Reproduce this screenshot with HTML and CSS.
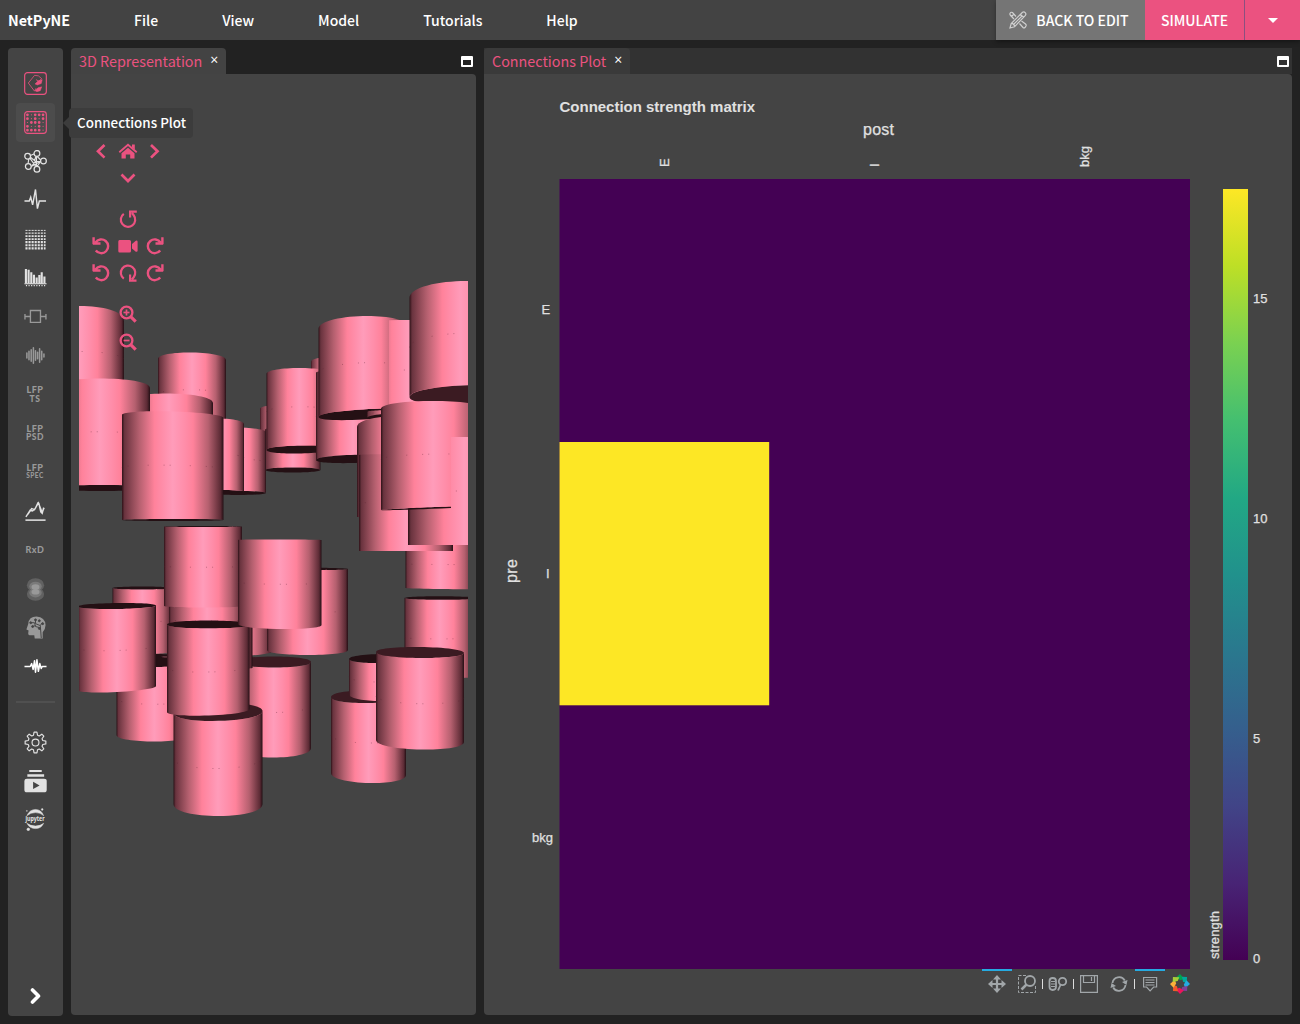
FILE: index.html
```html
<!DOCTYPE html>
<html lang="en">
<head>
<meta charset="utf-8">
<title>NetPyNE</title>
<link rel="stylesheet" href="styles.css">
</head>
<body>
<header class="topbar">
  <nav class="menu">
    <span class="brand">NetPyNE</span><span>File</span><span>View</span><span>Model</span><span>Tutorials</span><span>Help</span>
  </nav>
  <div class="actions">
    <button class="btn back">
      <svg width="20" height="20" viewBox="0 0 20 20" fill="none" stroke="#d0d0d0" stroke-width="1.2"><path d="M2 18l1.200-4.500L14.500 2.300q1.500-1 2.700.3 1.300 1.400.2 2.700L6.500 16.800zM12.500 4.500l3 3M4 13l3 3M5.500 14.500l9-9"/><path d="M8 6.500L4.500 2.500Q3 1.800 2.200 3 1.400 4.300 2.600 5.500L6 9M11.500 13.500l3.500 4q1 .8 2 0l1-1.500q.5-1-.5-2l-4-3M3.500 6.500L6 4"/></svg>
      <span>BACK TO EDIT</span>
    </button>
    <button class="btn simulate">SIMULATE</button>
    <button class="btn more"><i class="caret"></i></button>
  </div>
</header>
<main class="workspace">
  <aside class="sidebar">
    <div class="tool pink"><svg viewBox="0 0 24 24"><rect x=".7" y=".7" width="22.600" height="22.600" rx="3"/><path d="M11 3.500L4.500 11.500 11 20M11 3.500l4 .5 3.500 3-3 2.500-3-1.500M11 20l1.500-3" stroke-width=".8"/><path class="f" d="M11.500 12.500l3-3 4.500-1.500-1 4-4 1.500zM11.500 19.500l3-3 4-1-1.500 4-3.500 1z"/></svg></div>
    <div class="tool pink active"><svg viewBox="0 0 24 24"><rect x=".7" y=".7" width="22.600" height="22.600" rx="3"/><g stroke-width="2.900" stroke-linecap="round"><path d="M3.600 4h0M11.700 4h0M15.800 4h0M19.900 4h0M3.600 8h0M11.700 8h0M19.900 8h0M7.700 12h0M11.700 12h0M15.800 12h0M3.600 16h0M15.800 16h0M3.600 20h0M7.700 20h0M11.700 20h0M15.800 20h0"/><path stroke-width="1.200" d="M7.700 4h0M7.700 8h0M15.800 8h0M3.600 12h0M19.900 12h0M7.700 16h0M11.700 16h0M19.900 16h0M19.900 20h0"/></g></svg>
      <div class="tooltip">Connections Plot</div>
    </div>
    <div class="tool"><svg viewBox="0 0 24 24"><path d="M6 7l5 4 2-6M4 16l1-7M7 18l5-6 2 6M13 6l5 5-5 7M5 7l8 11M12 12h6M8 17l9-5M6 6l5-2M13 5v14"/><g fill="#444" stroke-width="1.300"><circle cx="3.800" cy="6.500" r="3"/><circle cx="13.500" cy="3.600" r="3"/><circle cx="20.300" cy="11.500" r="3"/><circle cx="13.500" cy="20" r="3"/><circle cx="4.500" cy="17.200" r="3"/></g></svg></div>
    <div class="tool"><svg viewBox="0 0 24 24"><path stroke-width="1.500" d="M.5 12.500h5l1.500-4 2 8 3-16 2 20 2-8h7"/></svg></div>
    <div class="tool"><svg viewBox="0 0 24 24"><g stroke-dasharray="2.200 1" stroke-width="2.300"><path stroke-width="1" d="M1.500 2.500h21"/><path stroke-width="1.400" d="M1.500 5.400h21"/><path stroke-width="1.800" d="M1.500 8.500h21M1.500 11.600h21"/><path d="M1.500 14.700h21M1.500 18h21M1.500 21.300h21"/></g></svg></div>
    <div class="tool"><svg viewBox="0 0 24 24"><g stroke-width="2.200"><path d="M2 3v15M4.800 4v14M7.600 6.500v12M10.400 9v9M13.200 12v6M16 9.500v9M18.500 6.500v12M21.300 11v7"/><path stroke-width="1.200" d="M.5 18.500h23"/><path stroke-width="1.400" stroke-dasharray="1.200 1.500" d="M2 20.500h21"/></g></svg></div>
    <div class="tool dim"><svg viewBox="0 0 24 24"><path stroke-width="1.400" d="M6.700 5.700h10.500v12.500H6.700zM1 12h5.700M17.200 12h5.500M1 9.500v5.500M22.900 9.500v5.500"/></svg></div>
    <div class="tool dim"><svg viewBox="0 0 24 24"><path stroke-width="1.600" stroke-linecap="round" d="M3 9.500v5M5.200 7.500v9M7.500 6v12M9.800 4v16M12 7v10M14.200 8.500v7M16.300 5v14M18.500 7.500v9M20.800 10.500v3"/></svg></div>
    <div class="tool dim label"><b>LFP</b><b class="sm">TS</b></div>
    <div class="tool dim label"><b>LFP</b><b class="sm">PSD</b></div>
    <div class="tool dim label"><b>LFP</b><b class="xs">SPEC</b></div>
    <div class="tool"><svg viewBox="0 0 24 24"><path stroke-width="1.500" d="M2 17.500l4.500-7 2.500 1 3-3 2.500-5.500 1 .5 2 9 1.500 1.500 1.500-6M4 15l4-6 3 1 4-7 4 10 2-5"/><path stroke-width="1.600" d="M1.500 21H22.500"/></svg></div>
    <div class="tool dim label"><b>RxD</b></div>
    <div class="tool dim"><svg viewBox="0 0 24 24" class="fl"><g opacity=".35"><ellipse cx="12" cy="7.500" rx="9" ry="7.200"/><ellipse cx="12" cy="16.800" rx="9" ry="7"/></g><g opacity=".45"><ellipse cx="12" cy="8.800" rx="6.500" ry="5"/><ellipse cx="12" cy="15.500" rx="6.500" ry="4.800"/></g><ellipse cx="12" cy="9.500" rx="4.200" ry="3"/><ellipse cx="12" cy="14.500" rx="4.200" ry="2.800"/></svg></div>
    <div class="tool dim"><svg viewBox="0 0 24 24" class="fl"><path d="M4.500 8Q5 .5 13 .5q9 .5 9.500 9 0 4-3 7.500v6.500h-8.300l-.5-3.500H6q-2 0-1.500-3l.3-2-2.300-1z"/><g stroke="#444" stroke-width="1" fill="#444"><path fill="none" d="M7 7h4l1 4 4 1M12 4v4l5 2 2-3M9 11l3-1M17 10l1 13"/><circle cx="7" cy="7" r="1"/><circle cx="12" cy="4" r="1"/><circle cx="16" cy="5" r="1"/><circle cx="9" cy="11" r="1"/><circle cx="19.500" cy="8" r="1"/><circle cx="16" cy="13" r="1"/></g></svg></div>
    <div class="tool"><svg viewBox="0 0 24 24"><path stroke="#fff" stroke-width="1.600" stroke-linejoin="round" d="M.5 12h6l1.500-3 1.500 6L11 6l1 12 1.500-13 1.500 12 1.500-8 1.500 5 1-2h4.500"/></svg></div>
    <hr>
    <div class="tool"><svg viewBox="0 0 24 24"><circle cx="12" cy="12" r="3.600"/><path stroke-linejoin="round" d="M10.500 1.200h3l.6 3.200 1.800.8 2.700-1.900 2.100 2.100-1.900 2.700.8 1.800 3.200.6v3l-3.200.6-.8 1.800 1.900 2.700-2.100 2.100-2.700-1.900-1.800.8-.6 3.200h-3l-.6-3.200-1.800-.8-2.700 1.900-2.100-2.100 1.900-2.700-.8-1.800-3.200-.6v-3l3.200-.6.8-1.800-1.900-2.700 2.100-2.100 2.700 1.900 1.800-.8z"/></svg></div>
    <div class="tool"><svg viewBox="0 0 24 24" class="fl"><path d="M5.500 0h13v2h-13zM3.500 4.500h17.500V7H3.500z"/><path fill-rule="evenodd" d="M3 9h18q2.700 0 2.700 2.500v9q0 2.700-2.700 2.700H3Q.4 23.200.4 20.500v-9Q.4 9 3 9zm6.500 3.300v7.500l6.800-3.700z"/></svg></div>
    <div class="tool"><svg viewBox="0 0 24 24"><path class="f" d="M3 8Q6 1.500 12 1.500T20.500 8Q17 4.800 12 4.800T3 8zM3 16q3 5.500 9 5.500t8.500-5.500q-3.500 2.800-8.500 2.800t-9-2.800z"/><circle class="f" cx="4.500" cy="22.300" r="1.400"/><circle class="f" cx="19" cy="1.500" r=".9"/><circle class="f" cx="3" cy="3" r=".5"/><text x="1.500" y="13.800" textLength="20" lengthAdjust="spacingAndGlyphs">jupyter</text></svg></div>
    <div class="expand"><svg width="14" height="18" viewBox="0 0 14 18" fill="none" stroke="#fff" stroke-width="3.600" stroke-linecap="round" stroke-linejoin="round"><path d="M3.500 4l6 6-6 6"/></svg></div>
  </aside>
  <section class="pane view3d">
    <div class="tabs"><div class="tab"><span>3D Representation</span><b>×</b></div><i class="maximize"></i></div>
    <div class="content">
      <svg class="scene" viewBox="79 74 389 941" width="389" height="941">
        <defs><linearGradient id="shade"><stop offset="0" stop-color="#2e1218"/><stop offset=".025" stop-color="#69333e"/><stop offset=".17" stop-color="#b5606f"/><stop offset=".32" stop-color="#ff829b"/><stop offset=".4" stop-color="#ff8da9"/><stop offset=".5" stop-color="#ff9cba"/><stop offset=".62" stop-color="#ff8da9"/><stop offset=".7" stop-color="#ff829b"/><stop offset=".85" stop-color="#b5606f"/><stop offset=".97" stop-color="#5c2b35"/><stop offset="1" stop-color="#241015"/></linearGradient></defs>
        <g id="cells"></g>
        <g fill="none" stroke="#eb5280" stroke-width="2.700">
          <path d="M104.500 145l-6.500 6.300 6.500 6.300M151 145l6.500 6.300-6.500 6.300M121.500 174.500l6.500 6.500 6.500-6.500"/>
          <path stroke-width="1.800" d="M119.300 152.300l8.700-7.500 8.700 7.500"/>
          <path fill="#eb5280" stroke="none" d="M128 147.800l6.500 5.500v5.300h-4.300v-4h-4.400v4h-4.300v-5.300zM132 144.500h2.800v5l-2.800-2z"/>
          <path stroke-width="2.200" d="M123.800 213.800a7.200 7.200 0 1 0 9.900 1.400l-1.700-2.200M136.800 211.600h-6.700v6"/>
          <path id="ccw" stroke-width="2.400" d="M95.500 242.500a6.900 6.900 0 1 1 .3 8M93.600 237.300v7M93 243.500h7.500"/>
          <use href="#ccw" y="27"/>
          <path id="cw" stroke-width="2.400" d="M160.500 242.500a6.900 6.900 0 1 0-.3 8M162.400 237.300v7M163 243.500h-7.500"/>
          <use href="#cw" y="27"/>
          <path stroke-width="2.200" d="M123.800 278.600a7.200 7.200 0 1 1 9.900-1.400l-1.700 2.200M136.500 280.600h-6.400v-6"/>
          <path fill="#eb5280" stroke="none" d="M119.500 240h10q1.500 0 1.500 1.500v9.500q0 1.500-1.500 1.500h-10q-1.200 0-1.200-1.500v-9.500q0-1.500 1.200-1.500zM132 244l3.800-3.300q1.800-.5 1.800 1v9q0 1.500-1.800 1L132 248.500z"/>
          <g id="lens" stroke-width="2.300"><circle cx="126.500" cy="312.500" r="5.900"/><path stroke-width="3.200" d="M130.700 316.700l5 5"/><path stroke-width="1.700" d="M123.500 312.500h6"/></g>
          <path stroke-width="1.700" d="M126.500 309.500v6"/>
          <use href="#lens" y="28"/>
        </g>
      </svg>
    </div>
  </section>
  <section class="pane plot">
    <div class="tabs"><div class="tab"><span>Connections Plot</span><b>×</b></div><i class="maximize"></i></div>
    <div class="content">
      <svg class="chart" viewBox="484 74 808 941" width="808" height="941">
        <defs><linearGradient id="viridis" x1="0" y1="0" x2="0" y2="1"><stop offset="0" stop-color="#fde725"/><stop offset=".1" stop-color="#bddf26"/><stop offset=".2" stop-color="#7ad151"/><stop offset=".3" stop-color="#44bf70"/><stop offset=".4" stop-color="#22a884"/><stop offset=".5" stop-color="#21918c"/><stop offset=".6" stop-color="#2a788e"/><stop offset=".7" stop-color="#355f8d"/><stop offset=".8" stop-color="#414487"/><stop offset=".9" stop-color="#482475"/><stop offset="1" stop-color="#440154"/></linearGradient></defs>
        <rect x="559.500" y="179" width="630.500" height="790" fill="#440154"/>
        <rect x="559.500" y="442" width="209.700" height="263.300" fill="#fde725"/>
        <rect x="1223" y="189" width="25" height="771" fill="url(#viridis)"/>
        <text class="title" x="559.500" y="112" textLength="195.500">Connection strength matrix</text>
        <text class="axis" x="863" y="135" textLength="31">post</text>
        <text class="axis" transform="translate(516.500 583) rotate(-90)" textLength="24">pre</text>
        <text transform="translate(668.500 167) rotate(-90)">E</text>
        <text transform="translate(878.500 167) rotate(-90)">I</text>
        <text transform="translate(1089 167) rotate(-90)" textLength="21">bkg</text>
        <text x="541.500" y="314">E</text><text x="546" y="578">I</text><text x="532" y="842" textLength="21">bkg</text>
        <text x="1253" y="303">15</text><text x="1253" y="523">10</text><text x="1253" y="743">5</text><text x="1253" y="963">0</text>
        <text transform="translate(1219 959) rotate(-90)" textLength="48">strength</text>
        <path stroke="#26aae1" stroke-width="2" d="M982 970h30M1135 970h30"/>
        <path stroke="#ddd" d="M1042.500 979v10M1073.500 979v10M1134.500 979v10"/>
        <g fill="none" stroke="#a1a6a9" stroke-width="1.800">
          <path stroke-width="2.200" d="M990 984h14M997 977v14"/><path fill="#a1a6a9" stroke="none" d="M997 975l4 4.500h-8zM997 993l4-4.500h-8zM988 984l4.500-4v8zM1006 984l-4.500-4v8z"/>
          <path stroke-width="1" stroke-dasharray="3 1.500" d="M1026 975.500h-7.500v17h17V986"/><circle cx="1030" cy="981" r="5"/><path stroke-width="2.500" d="M1026.500 984.500l-5 5"/>
          <rect x="1049.500" y="978" width="6.500" height="12" rx="3.200"/><path stroke-width="1" d="M1051 981.500h4M1051 984h4M1051 986.500h4"/><circle cx="1062.500" cy="981.500" r="3.700"/><path d="M1060.500 985l-2.500 5.500"/>
          <path stroke-width="1.200" d="M1080.600 975.600h16.800v16.800h-16.800zM1083.500 976v6.500h11V976M1091.500 977v4"/>
          <path d="M1112.500 983a6.600 6.600 0 0 1 12.300-2.500M1125.500 985a6.600 6.600 0 0 1-12.300 2.500"/><path fill="#a1a6a9" stroke="none" d="M1127.500 980l-1 5-4.500-3zM1110.500 988l1-5 4.500 3z"/>
          <path stroke-width="1.200" d="M1143.600 977.500h13v9.500h-3l-3.500 3.800-3.500-3.800h-3zM1145.500 980h9M1145.500 982.500h9M1145.500 985h9"/>
        </g>
        <g id="logo" transform="translate(1180 984)"></g>
      </svg>
    </div>
  </section>
</main>
<script src="scene.js"></script>
</body>
</html>
```
FILE: styles.css
```css
* { box-sizing: border-box; }
body {
  margin: 0;
  height: 1024px;
  display: flex;
  flex-direction: column;
  background: #222;
  color: #fff;
  font: 500 14px/20px "Noto Sans CJK SC", "Noto Sans", sans-serif;
  overflow: hidden;
}
.topbar { height: 40px; flex: none; display: flex; justify-content: space-between; background: #434343; }
.menu { display: flex; align-items: center; gap: 64px; padding-left: 8px; }
.brand { font-weight: 700; font-size: 14.300px; }
.actions { display: flex; box-shadow: 0 2px 4px rgba(0, 0, 0, .35); }
.btn { display: flex; align-items: center; justify-content: center; border: 0; padding: 0; color: #fff; font: inherit; background: #eb5280; }
.back { width: 149px; gap: 8px; padding-right: 4px; background: #757575; }
.simulate { width: 99px; }
.more { width: 56px; border-left: 1px solid #8a5080; }
.caret { border: 5px solid transparent; border-top-color: #fff; border-bottom: 0; }

.workspace { flex: 1; display: flex; gap: 8px; padding: 8px 8px 9px; }
.sidebar { width: 55px; height: 968px; flex: none; display: flex; flex-direction: column; align-items: center; padding-top: 16px; background: #444; border-radius: 4px; }
.tool { position: relative; width: 39px; height: 38.900px; flex: none; display: flex; align-items: center; justify-content: center; border-radius: 4px; color: #e2e2e2; }
.tool svg { width: 23px; height: 23px; fill: none; stroke: currentColor; stroke-width: 1.200; }
.tool .f { fill: currentColor; stroke-width: .5; }
.tool svg.fl { fill: currentColor; stroke: none; }
.tool text { font: 700 6.500px "Noto Sans", sans-serif; fill: currentColor; stroke: none; }
.pink { color: #eb5280; }
.active { background: #4c4c4c; }
.dim { color: #999; }
.label { flex-direction: column; font: 700 9px/8.500px Lato, sans-serif; letter-spacing: .5px; }
.label b { margin-left: -1px; }
.label .sm { font-size: 8.500px; }
.label .xs { font-size: 6.500px; }
.sidebar hr { width: 39px; height: 2px; flex: none; margin: 14.500px 0 20px; border: 0; background: #505050; }
.expand { margin-top: auto; height: 30px; }
.tooltip { position: absolute; z-index: 2; left: 53px; top: 5px; width: 124px; height: 30px; padding-left: 8px; font-size: 13.400px; line-height: 29px; background: #3c3c3c; border-radius: 4px; color: #fff; white-space: nowrap; }
.tooltip::before { content: ""; position: absolute; left: -6px; top: 8px; border: 7px solid transparent; border-left: 0; border-right-color: #3c3c3c; }

.pane { display: flex; flex-direction: column; height: 967px; }
.view3d { width: 405px; }
.plot { width: 808px; }
.tabs { height: 26px; display: flex; justify-content: space-between; align-items: center; padding-right: 3px; }
.plot .tabs { background: #323232; }
.tab { height: 26px; display: flex; align-items: center; gap: 8px; padding: 0 8px; color: #eb5280; font-size: 14.350px; font-weight: 400; background: #434343; border-radius: 4px 4px 0 0; }
.plot .tab { background: #3a3a3a; }
.tab b { color: #fff; font: 400 14px/16px "Open Sans", sans-serif; padding-bottom: 3px; }
.maximize { width: 12px; height: 11px; border: 2px solid #fff; border-top-width: 4px; border-radius: 1px; margin-top: 1px; }
.content { flex: 1; display: flex; justify-content: center; background: #444; border-radius: 0 4px 4px 4px; }
.scene, .chart { display: block; }
.chart text { font: 13px "Liberation Sans", Arial, sans-serif; fill: #e0e0e0; stroke: #e0e0e0; stroke-width: .25; }
.chart .title { font-size: 15px; font-weight: 700; stroke: none; }
.chart .axis { font-size: 16px; }
```
FILE: scene.js
```js
const NS = 'http://www.w3.org/2000/svg';
const cells = document.getElementById('cells');
const shade = document.getElementById('shade');

// Each cell, back to front:
// left, right, top y, top tilt, top bulge, bottom y, bottom tilt, bottom bulge, clip left
const data = [
  [36, 124, 321, 0, -15, 400, 0, -3],
  [158, 226, 359, 1, -7, 430, 0, -3],
  [125, 213, 402, 1, -9, 450, 0, -3],
  [50, 150, 388, 0, -9.5, 488, 0, -3],
  [260, 300, 409, 0, -4, 465, 0, -2],
  [265, 320.5, 430, 0, -4, 470, 0, -2.5],
  [212, 266, 431, 1, -4, 493, 0, -2],
  [196, 244, 423, 1, -5, 491.5, 0, -1.5],
  [122, 223.5, 415, 3, -5, 520, 0, -1],
  [311, 350, 362, 0, -5, 420, 0, -2],
  [266.5, 332, 374, 0, -6, 450, -1, -4],
  [316, 390, 373, 0, -4, 460, -2, -4],
  [318.5, 408, 329, -2, -12, 417, -5, -5],
  [362, 455, 322, 0, -2, 420, 0, 0, 389],
  [367, 420, 412, 0, -2, 418, -4, -3],
  [409.5, 512, 298, -3, -15.5, 397, -5, -9],
  [357, 446, 427, 0, -11, 517, 0, 0],
  [405.5, 475, 540, 0, 0, 588, 1, .5],
  [359, 453, 455, 0, -1, 551, 0, 0],
  [408, 520, 438, 0, -1, 545, 0, 0],
  [381, 485, 409, 0, -8, 510, -4, -.8],
  [408, 520, 438, 0, -1, 545, 0, 0, 451],
  [404.5, 475, 598, 0, 1.8, 677, 0, 1],
  [331, 406, 697, -1, 6.5, 773, 2, 9],
  [349, 412, 659, -1, 4.5, 694, 0, 7],
  [376, 464, 652, 1, 5.5, 740, 2, 8.5],
  [112.5, 172, 588, 0, 1.5, 652, 0, 2],
  [120, 180, 655.5, 0, 1.5, 700, 0, 2],
  [116.5, 192, 662, 0, 5, 735, 0, 6.5],
  [78, 156, 606.5, -1, 3, 690, -4, 4],
  [190, 272, 600, 0, 0, 651, 0, 5],
  [267, 348, 569, 0, 1.2, 650, 0, 5],
  [236, 311, 662, 0, 5.5, 748, 0, 9.5],
  [180, 252.5, 606, 0, 0, 668, 0, 1],
  [169, 245, 600, 0, 0, 640, 0, 2],
  [164, 242, 526.5, 0, .5, 606, 0, 1.5],
  [173.5, 262.5, 713, -2, 9, 804, 0, 12],
  [167, 249.5, 624.5, 0, 4, 712, -3, 5],
  [238, 321.5, 540, 0, -.5, 624, 1, 4.5],
];

function add(parent, name, attrs) {
  const el = document.createElementNS(NS, name);
  for (const k in attrs) el.setAttribute(k, attrs[k]);
  parent.appendChild(el);
  return el;
}
const arc = (x, y, r) => `${x[0]} ${y[0] + r * 4 / 3} ${x[1]} ${y[1] + r * 4 / 3} ${x[1]} ${y[1]}`;

data.forEach(([l, r, t, tt, tr, b, bt, br, clip], i) => {
  const g = add(cells, 'g', {});
  if (clip) {
    const c = add(cells, 'clipPath', { id: 'clip' + i });
    add(c, 'rect', { x: clip, y: 74, width: 100, height: 941 });
    g.setAttribute('clip-path', `url(#clip${i})`);
  }
  const grad = shade.cloneNode(true);
  grad.id = 'shade' + i;
  grad.setAttribute('gradientUnits', 'userSpaceOnUse');
  grad.setAttribute('x1', l);
  grad.setAttribute('x2', r);
  cells.appendChild(grad);
  const x = [l, r], top = [t, t + tt], bot = [b, b + bt];
  const cap = (y, k) => add(g, 'path', {
    d: `M${l} ${y[0]}C${arc(x, y, k)}C${arc([r, l], [y[1], y[0]], -k)}Z`,
    fill: Math.abs(k) > 5 ? '#3b1b22' : '#241014',
  });
  if (tr > 0) cap(top, tr);
  if (br < 0) cap(bot, br);
  add(g, 'path', { d: `M${l} ${top[0]}C${arc(x, top, tr)}L${r} ${bot[1]}C${arc([r, l], [bot[1], bot[0]], br)}Z`, fill: `url(#shade${i})` });
  const mid = [(t + b) / 2, (t + tt + b + bt) / 2];
  add(g, 'path', {
    d: `M${l} ${mid[0]}C${arc(x, mid, (tr + br) / 2)}`,
    fill: 'none', stroke: '#50202c', 'stroke-opacity': .45, 'stroke-width': .8, 'stroke-dasharray': '1 5 1 19 1 15',
  });
});

// Ring of coloured blades in the plot toolbar
const logo = document.getElementById('logo');
['#00a54f', '#00a99d', '#26aae1', '#7f3f98', '#ed145b', '#f15a29', '#fbb03b', '#a6ce39'].forEach((fill, i) => {
  add(logo, 'path', { d: 'M-3.800-6.500L0-10l4.300 4.800L.5-3.800z', fill, transform: `rotate(${i * 45})` });
});
```
